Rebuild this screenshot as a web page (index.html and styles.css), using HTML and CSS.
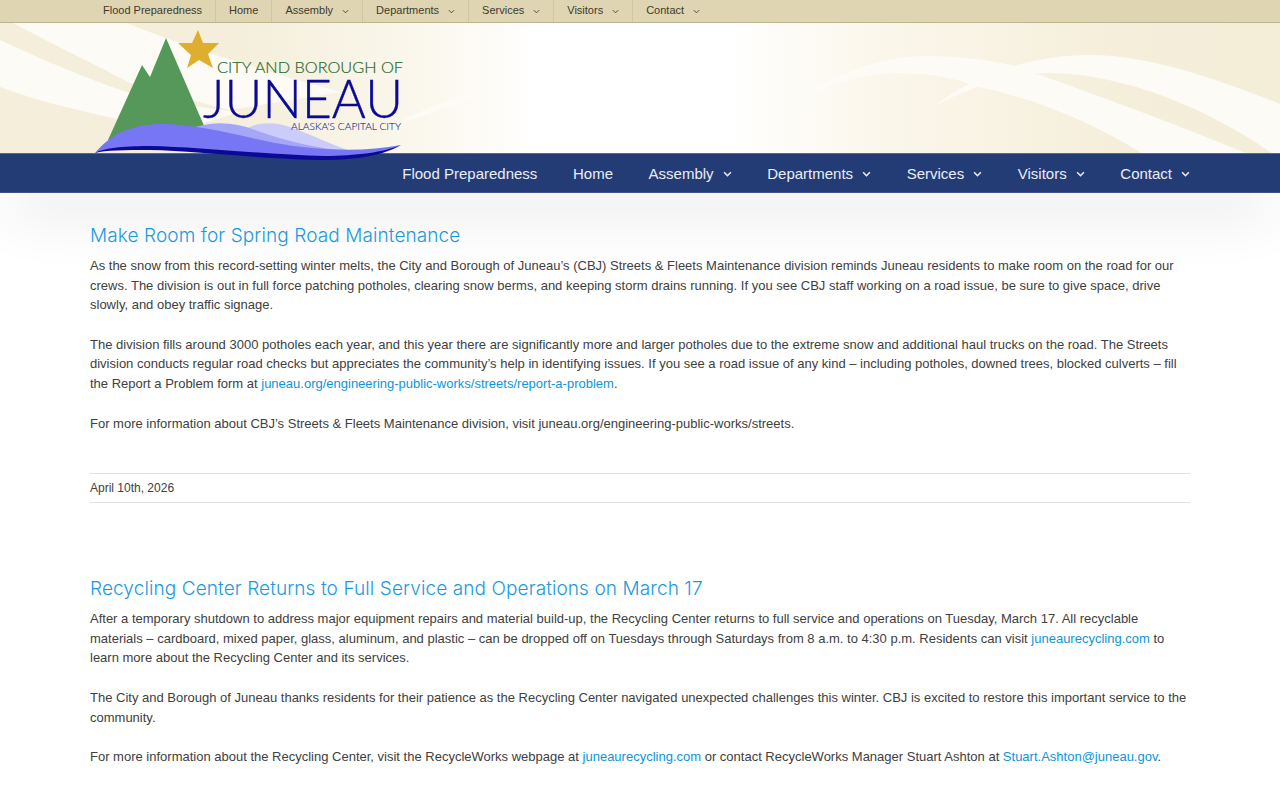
FILE: index.html
```html
<!DOCTYPE html>
<html lang="en">
<head>
<meta charset="UTF-8">
<meta name="viewport" content="width=device-width, initial-scale=1.0">
<title>City and Borough of Juneau</title>
<link rel="stylesheet" href="styles.css">
</head>
<body>

<div class="topbar">
  <ul class="wrap">
    <li><a href="#">Flood Preparedness</a></li>
    <li><a href="#">Home</a></li>
    <li><a href="#">Assembly<svg class="chev" viewBox="0 0 8 5"><path d="M1 1l3 3 3-3"/></svg></a></li>
    <li><a href="#">Departments<svg class="chev" viewBox="0 0 8 5"><path d="M1 1l3 3 3-3"/></svg></a></li>
    <li><a href="#">Services<svg class="chev" viewBox="0 0 8 5"><path d="M1 1l3 3 3-3"/></svg></a></li>
    <li><a href="#">Visitors<svg class="chev" viewBox="0 0 8 5"><path d="M1 1l3 3 3-3"/></svg></a></li>
    <li><a href="#">Contact<svg class="chev" viewBox="0 0 8 5"><path d="M1 1l3 3 3-3"/></svg></a></li>
  </ul>
</div>

<header class="banner">
  <svg class="banner-bg" viewBox="0 23 1280 130" preserveAspectRatio="none">
    <path fill="#fdfbf5" d="M787 106C830 75 880 56 926 56C960 56 990 60 1011 65C1070 85 1180 125 1265 161L1154 161C1100 125 1040 100 979 87C950 76 925 73 893 73C860 73 820 88 787 106Z"/>
    <path fill="#fdfbf5" d="M934 106C975 75 1030 55 1089 55C1150 55 1220 80 1280 104L1280 159C1220 115 1130 73 1048 73C1010 73 970 88 934 106Z"/>
    <path fill="#fdfbf5" d="M13 23L127 23C180 45 260 70 340 92L230 110C190 100 160 92 130 83C90 62 50 43 13 23Z"/>
    <path fill="#fdfbf5" d="M0 40C50 63 90 80 130 93C170 103 200 108 240 112L180 130C155 127 135 122 113 118C75 110 35 100 0 87Z"/>
    <path fill="#fdfbf5" d="M400 122C425 108 455 96 490 90C460 103 430 115 400 122Z"/>
  </svg>
  <svg class="logo" viewBox="90 25 320 140">
    <path fill="#55985a" d="M108 140L142 65L150 77L166 38L205 128L150 142Z"/>
    <path fill="#e0ae2e" d="M198 30L203 43L219 43L208 54L213 68L199 60L187 68L191 55L178 43L192 43Z"/>
    <path fill="#ccccfa" d="M245 130C255 122 275 121 290 127C310 134 330 144 350 151L300 151Z"/>
    <path fill="#a5a5fa" d="M195 127C215 121 235 122 255 130C285 141 320 149 350 151L260 150Z"/>
    <path fill="#7777f5" d="M95 153C108 138 125 125 160 124C200 124 240 136 275 143C320 151 365 152 401 145C385 153 360 157 325 158C270 157 200 147 150 148C125 148 105 149 95 153Z"/>
    <path fill="#0a0a96" d="M95 153C105 147 130 146 150 146C200 147 270 155 325 156C355 156 385 152 401 145C385 155 355 160 325 160C270 160 200 151 150 150C125 150 105 150 95 153Z"/>
    <text class="logo-city" x="217" y="73" textLength="186" lengthAdjust="spacingAndGlyphs">CITY AND BOROUGH OF</text>
    <text class="logo-name" x="203" y="118" textLength="200" lengthAdjust="spacingAndGlyphs">JUNEAU</text>
    <text class="logo-tag" x="291" y="130" textLength="110" lengthAdjust="spacingAndGlyphs">ALASKA'S CAPITAL CITY</text>
  </svg>
</header>

<nav class="mainnav">
  <ul class="wrap">
    <li><a href="#">Flood Preparedness</a></li>
    <li><a href="#">Home</a></li>
    <li><a href="#">Assembly<svg class="chev" viewBox="0 0 8 5"><path d="M1 1l3 3 3-3"/></svg></a></li>
    <li><a href="#">Departments<svg class="chev" viewBox="0 0 8 5"><path d="M1 1l3 3 3-3"/></svg></a></li>
    <li><a href="#">Services<svg class="chev" viewBox="0 0 8 5"><path d="M1 1l3 3 3-3"/></svg></a></li>
    <li><a href="#">Visitors<svg class="chev" viewBox="0 0 8 5"><path d="M1 1l3 3 3-3"/></svg></a></li>
    <li><a href="#">Contact<svg class="chev" viewBox="0 0 8 5"><path d="M1 1l3 3 3-3"/></svg></a></li>
  </ul>
</nav>

<main class="wrap content">
  <article class="post">
    <h2>Make Room for Spring Road Maintenance</h2>
    <p>As the snow from this record-setting winter melts, the City and Borough of Juneau’s (CBJ) Streets &amp; Fleets Maintenance division reminds Juneau residents to make room on the road for our crews. The division is out in full force patching potholes, clearing snow berms, and keeping storm drains running. If you see CBJ staff working on a road issue, be sure to give space, drive slowly, and obey traffic signage.</p>
    <p>The division fills around 3000 potholes each year, and this year there are significantly more and larger potholes due to the extreme snow and additional haul trucks on the road. The Streets division conducts regular road checks but appreciates the community’s help in identifying issues. If you see a road issue of any kind – including potholes, downed trees, blocked culverts – fill the Report a Problem form at <a href="#">juneau.org/engineering-public-works/streets/report-a-problem</a>.</p>
    <p>For more information about CBJ’s Streets &amp; Fleets Maintenance division, visit juneau.org/engineering-public-works/streets.</p>
    <div class="meta">April 10th, 2026</div>
  </article>
  <article class="post">
    <h2>Recycling Center Returns to Full Service and Operations on March 17</h2>
    <p>After a temporary shutdown to address major equipment repairs and material build-up, the Recycling Center returns to full service and operations on Tuesday, March 17. All recyclable materials – cardboard, mixed paper, glass, aluminum, and plastic – can be dropped off on Tuesdays through Saturdays from 8 a.m. to 4:30 p.m. Residents can visit <a href="#">juneaurecycling.com</a> to learn more about the Recycling Center and its services.</p>
    <p>The City and Borough of Juneau thanks residents for their patience as the Recycling Center navigated unexpected challenges this winter. CBJ is excited to restore this important service to the community.</p>
    <p>For more information about the Recycling Center, visit the RecycleWorks webpage at <a href="#">juneaurecycling.com</a> or contact RecycleWorks Manager Stuart Ashton at <a href="#">Stuart.Ashton@juneau.gov</a>.</p>
  </article>
</main>

</body>
</html>
```

FILE: styles.css
```css
html, body {
  height: 100%;
  overflow: hidden;
}

body {
  margin: 0;
  background: #fff;
  color: #404040;
  font-family: "Liberation Sans", Arial, sans-serif;
  font-size: 13px;
  line-height: 19.6px;
}

ul {
  list-style: none;
  margin: 0;
  padding: 0;
}

.wrap {
  width: 1100px;
  margin: 0 auto;
}

.chev {
  fill: none;
  stroke: currentColor;
  stroke-width: 1;
}

/* top bar */
.topbar {
  height: 22px;
  background: #dfd5b2;
  border-bottom: 1px solid #bdb491;
}

.topbar ul {
  display: flex;
}

.topbar li {
  border-right: 1px solid #cfc5a2;
}

.topbar li:last-child {
  border-right: 0;
}

.topbar a {
  display: flex;
  align-items: center;
  height: 22px;
  padding: 0 13px;
  color: #3d3a2c;
  font-size: 11px;
  text-decoration: none;
}

.topbar .chev {
  width: 7px;
  height: 5px;
  margin-left: 9px;
}

/* banner */
.banner {
  position: relative;
  z-index: 3;
  height: 130px;
  background: linear-gradient(90deg, #f4eeda 0%, #f4eeda 18%, #fbf8ee 34%, #fff 42%, #fff 57%, #fbf7ec 68%, #f5eeda 88%, #f4edd8 100%);
}

.banner-bg {
  position: absolute;
  left: 0;
  top: 0;
  width: 100%;
  height: 100%;
}

.logo {
  position: absolute;
  left: 90px;
  top: 2px;
  width: 320px;
  height: 140px;
}

.logo text {
  font-family: Lato, "Liberation Sans", sans-serif;
  font-weight: 300;
}

.logo-city {
  fill: #2c6a2c;
  stroke: #2c6a2c;
  stroke-width: 0.2px;
  font-size: 16px;
}

.logo-name {
  fill: #0a0a96;
  stroke: #0a0a96;
  stroke-width: 0.4px;
  font-size: 54px;
}

.logo-tag {
  fill: #22228c;
  stroke: #22228c;
  stroke-width: 0.1px;
  font-size: 10px;
}

/* main nav */
.mainnav {
  position: relative;
  z-index: 2;
  box-sizing: border-box;
  height: 40px;
  background: #243c75;
  border-top: 1px solid #56688f;
  border-bottom: 1px solid #3f5485;
  box-shadow: 0 25px 60px -10px rgba(0, 0, 0, 0.16);
}

.mainnav ul {
  display: flex;
  justify-content: flex-end;
  gap: 35.6px;
}

.mainnav a {
  display: flex;
  align-items: center;
  height: 39px;
  color: #e9edf5;
  font-size: 15px;
  text-decoration: none;
}

.mainnav .chev {
  width: 9px;
  height: 6px;
  margin-left: 9px;
  stroke-width: 1.4;
}

/* posts */
.content {
  position: relative;
  z-index: 2;
  padding-top: 29px;
}

.post {
  margin-bottom: 72.5px;
}

.post h2 {
  margin: 0 0 7px;
  color: #1a9ae0;
  font-family: Inter, "Liberation Sans", sans-serif;
  font-size: 19px;
  font-weight: 300;
  line-height: 27px;
  letter-spacing: 0.1px;
}

.post p {
  margin: 0 0 20px;
}

.post a {
  color: #0b95dc;
  text-decoration: none;
}

.meta {
  margin-top: 40px;
  padding: 5px 0 3px;
  border-top: 1px solid #e0e0e0;
  border-bottom: 1px solid #e0e0e0;
  font-size: 12px;
}
```
